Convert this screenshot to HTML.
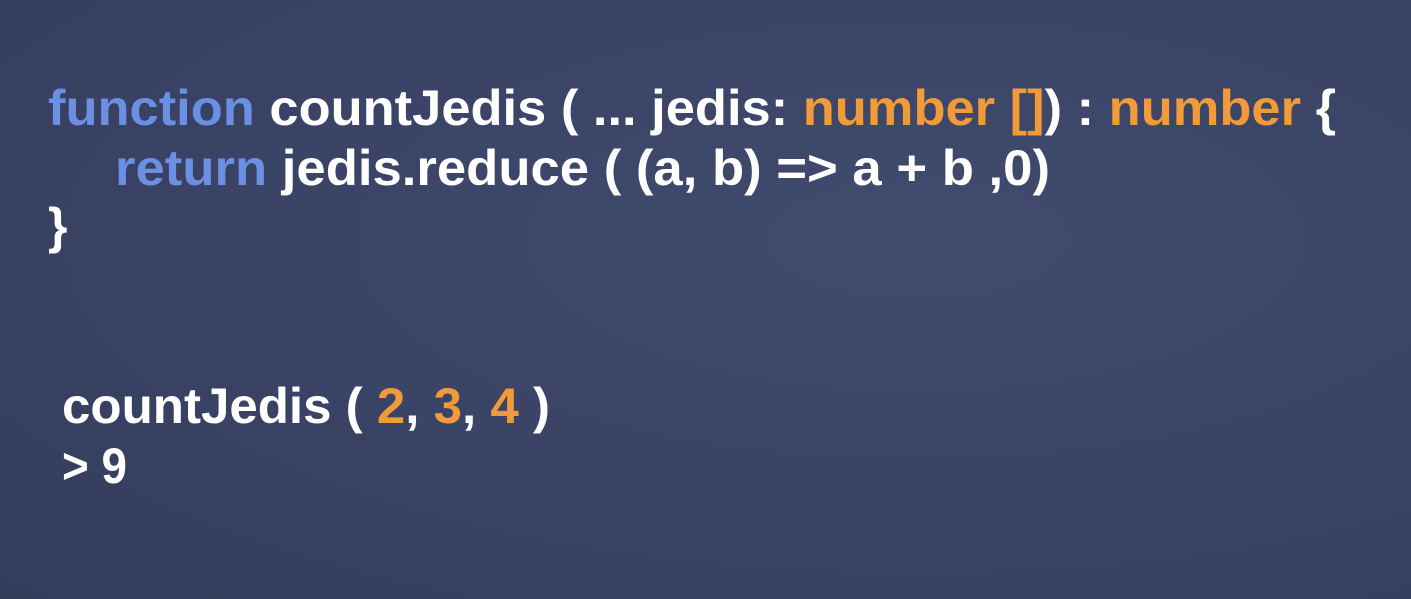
<!DOCTYPE html>
<html><head><style>
html,body{margin:0;padding:0;width:1411px;height:599px;overflow:hidden;}
body{background:radial-gradient(ellipse at 65% 40%,#414b6d 0%,#3a4365 55%,#343c5c 100%);}
svg{position:absolute;left:0;top:0}
text{font-family:"Liberation Sans",sans-serif;font-weight:bold;font-size:50px;fill:#fff}
.b{fill:#6b8fe2}.o{fill:#f19a3a}
</style></head><body>
<svg width="1411" height="599">
<text x="48" y="125" textLength="1288" lengthAdjust="spacingAndGlyphs"><tspan class="b">function</tspan> countJedis ( ... jedis: <tspan class="o">number []</tspan>) : <tspan class="o">number</tspan> {</text>
<text x="115" y="185" textLength="935" lengthAdjust="spacingAndGlyphs"><tspan class="b">return</tspan> jedis.reduce ( (a, b) =&gt; a + b ,0)</text>
<text x="48" y="243">}</text>
<text x="62" y="423" textLength="488" lengthAdjust="spacingAndGlyphs">countJedis ( <tspan class="o">2</tspan>, <tspan class="o">3</tspan>, <tspan class="o">4</tspan> )</text>
<text x="62" y="483" textLength="65" lengthAdjust="spacingAndGlyphs">&gt; 9</text>
</svg>
</body></html>
